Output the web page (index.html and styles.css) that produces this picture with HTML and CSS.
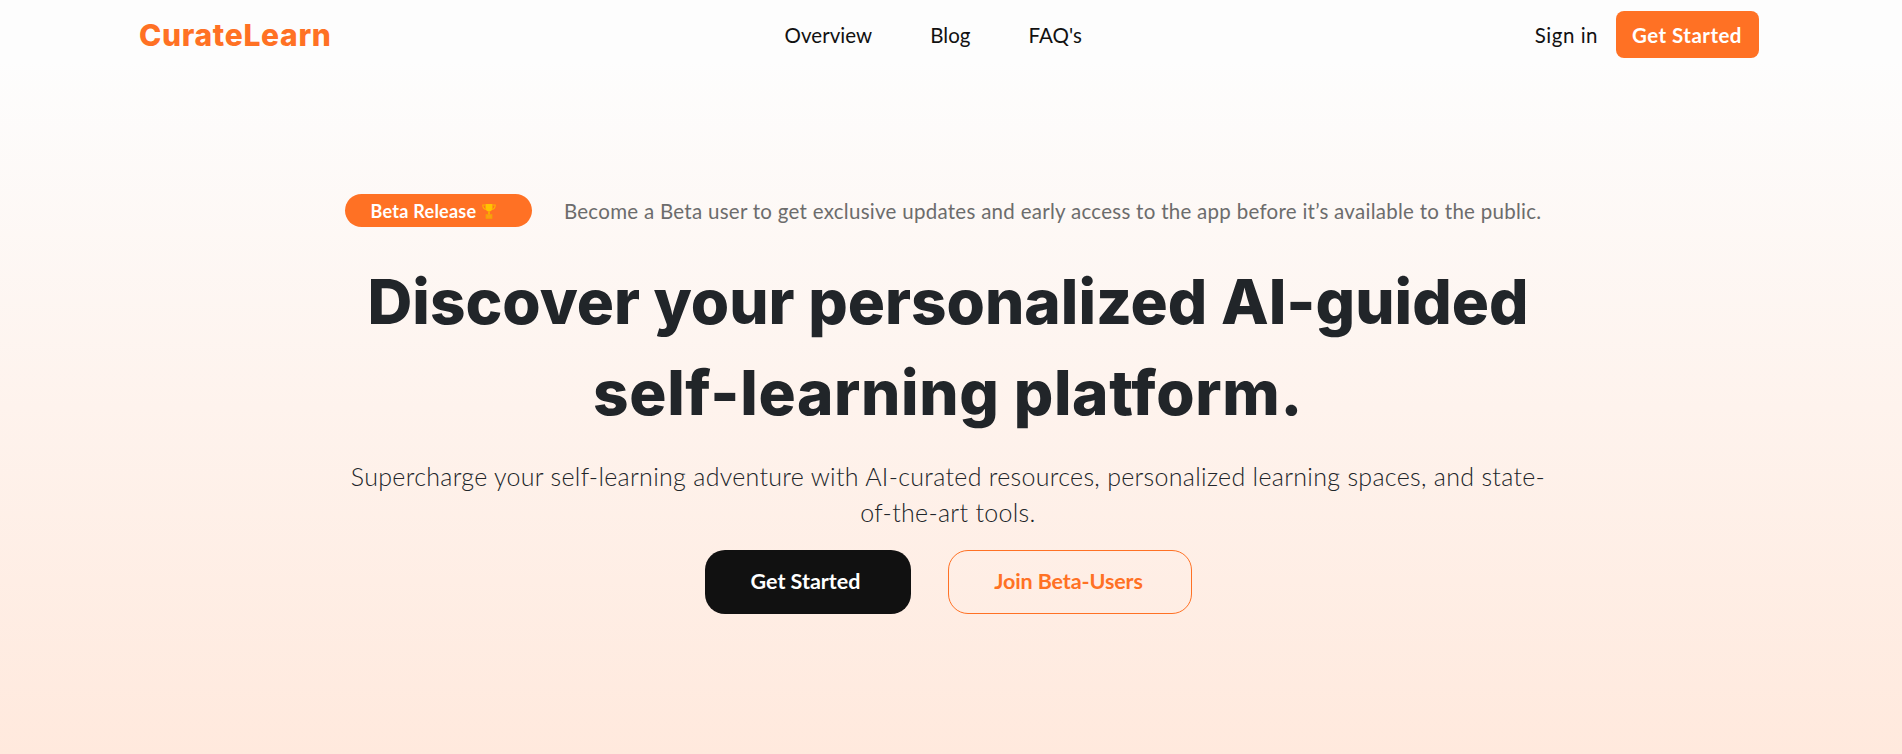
FILE: index.html
```html
<!DOCTYPE html>
<html lang="en">
<head>
<meta charset="utf-8">
<title>CurateLearn</title>
<link rel="stylesheet" href="styles.css">
</head>
<body>
<div class="page">
  <header class="nav">
    <a class="logo" href="#">CurateLearn</a>
    <nav class="links">
      <a href="#">Overview</a>
      <a href="#">Blog</a>
      <a href="#">FAQ's</a>
    </nav>
    <div class="actions">
      <a class="signin" href="#">Sign in</a>
      <a class="btn-nav" href="#">Get Started</a>
    </div>
  </header>
  <main class="hero">
    <div class="notice">
      <span class="pill">Beta Release
        <svg class="trophy" viewBox="0 0 14 16" width="14" height="16" aria-hidden="true">
          <path d="M3.500 1h7v3.800c0 2.300-1.400 3.800-3.500 3.800S3.500 7.100 3.500 4.800z" fill="#ffc400"/>
          <path d="M3.500 2H.8c0 2.800 1 4.200 3.400 4.500M10.500 2h2.700c0 2.800-1 4.200-3.400 4.500" fill="none" stroke="#ffb300" stroke-width="1.100"/>
          <rect x="6.200" y="8.400" width="1.600" height="3.400" fill="#ffb300"/>
          <rect x="4.200" y="11.800" width="5.600" height="3.400" fill="#ff9a1a" stroke="#f2a900" stroke-width="1"/>
        </svg>
      </span>
      <span class="notice-text">Become a Beta user to get exclusive updates and early access to the app before it’s available to the public.</span>
    </div>
    <h1 class="title">Discover your personalized AI-guided<br><span class="title-wide">self-learning platform.</span></h1>
    <p class="lead">Supercharge your self-learning adventure with AI-curated resources, personalized learning spaces, and state-of-the-art tools.</p>
    <div class="cta">
      <a class="btn-dark" href="#">Get Started</a>
      <a class="btn-line" href="#">Join Beta-Users</a>
    </div>
  </main>
</div>
</body>
</html>
```

FILE: styles.css
```css
* { box-sizing: border-box; }
html, body { margin: 0; padding: 0; }
body {
  font-family: Lato, "Noto Sans", sans-serif;
  color: #212529;
  background: #fff;
}
a { text-decoration: none; color: inherit; }
.page {
  height: 754px;
  overflow: hidden;
  background: linear-gradient(180deg, #fdfdfd 0%, #fdfdfd 8%, #ffe9dd 100%);
  display: flex;
  flex-direction: column;
}
.nav {
  height: 69px;
  padding: 0 143px 0 139px;
  display: flex;
  justify-content: space-between;
  align-items: center;
}
.logo {
  font-family: Inter, sans-serif;
  font-weight: 800;
  font-size: 30px;
  letter-spacing: 0.7px;
  color: #ff7124;
}
.links { display: flex; gap: 58px; font-size: 20.500px; letter-spacing: 0.05px; color: #111; }
.actions { display: flex; justify-content: flex-end; align-items: center; gap: 18px; }
.signin { font-size: 20.500px; letter-spacing: 0.5px; color: #111; }
.btn-nav {
  width: 143px;
  height: 47px;
  padding-right: 1px;
  display: flex;
  align-items: center;
  justify-content: center;
  background: #ff7124;
  color: #fff;
  font-size: 20.500px;
  letter-spacing: 0.45px;
  font-weight: 700;
  border-radius: 8px;
}
.hero {
  display: flex;
  flex-direction: column;
  align-items: center;
  padding: 125px 6px 0 0;
}
.notice {
  width: 1197px;
  margin-right: 10px;
  display: flex;
  align-items: center;
  justify-content: space-between;
  height: 33px;
}
.pill {
  width: 187px;
  height: 33px;
  padding-right: 9px;
  border-radius: 17px;
  background: #ff7124;
  color: #fff;
  font-size: 18px;
  letter-spacing: 0.25px;
  font-weight: 700;
  display: inline-flex;
  align-items: center;
  justify-content: center;
  gap: 6px;
}
.trophy { display: block; }
.notice-text { font-size: 20.500px; letter-spacing: 0.28px; color: #6c6c6c; white-space: nowrap; }
.title {
  margin: 29px 0 0;
  font-family: Inter, sans-serif;
  font-weight: 800;
  font-size: 62px;
  line-height: 91px;
  color: #212529;
  text-align: center;
}
.title-wide { letter-spacing: 0.65px; }
.lead {
  margin: 20px 0 0;
  width: 1200px;
  font-size: 25px;
  line-height: 36px;
  letter-spacing: 0.3px;
  font-weight: 300;
  color: #212529;
  text-align: center;
}
.cta { display: flex; gap: 37px; margin-top: 20px; }
.btn-dark, .btn-line {
  height: 64px;
  padding-bottom: 2px;
  display: flex;
  align-items: center;
  justify-content: center;
  font-size: 21.500px;
  font-weight: 700;
  border-radius: 20px;
}
.btn-dark { width: 206px; padding-right: 4px; background: #111; color: #fff; }
.btn-line { width: 244px; padding-right: 2px; letter-spacing: -0.1px; border: 1px solid #ff7124; color: #ff7124; }
```
